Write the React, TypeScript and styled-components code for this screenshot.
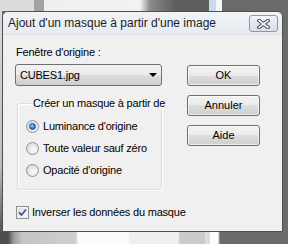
import React from "react";
import styled, { createGlobalStyle } from "styled-components";

const GlobalStyle = createGlobalStyle`
  html, body {
    margin: 0;
    padding: 0;
    width: 288px;
    height: 244px;
    overflow: hidden;
  }
  body {
    font-family: "Liberation Sans", Arial, sans-serif;
    font-size: 11px;
    letter-spacing: -0.2px;
    color: #000;
  }
`;

const Desktop = styled.div`
  width: 288px;
  height: 244px;
  display: grid;
  grid-template-rows: 11px 221px 12px;
  background: #6b6b6b;
`;

const TopStrip = styled.div`
  background: linear-gradient(
    to right,
    #dcdcdc 0px, #dcdcdc 34px,
    #a2a2a2 34px, #a2a2a2 44px,
    #efefef 44px, #f2f2f2 140px,
    #8a8a8a 150px, #5e5e5e 175px, #5e5e5e 209px,
    #c9dbf1 209px, #c9dbf1 216px,
    #f6f6f6 216px, #f6f6f6 222px,
    #6a6a6a 222px
  );
`;

const MiddleRow = styled.div`
  display: flex;
`;

const SideEdge = styled.div<{ $w: number; $bg: string }>`
  width: ${(p) => p.$w}px;
  background: ${(p) => p.$bg};
`;

const BottomStrip = styled.div`
  background: linear-gradient(
    to right,
    #4e4e4e 0px, #4e4e4e 8px,
    #9c9c9c 14px, #c4c4c4 22px, #cfcfcf 76px,
    #fbfbfb 78px, #fbfbfb 128px,
    #efefef 130px, #efefef 178px,
    #cbcbcb 180px, #cbcbcb 205px,
    #d0e1f5 205px, #d0e1f5 210px,
    #fdfdfd 210px, #fdfdfd 218px,
    #6b6b6b 220px
  );
`;

const Window = styled.div`
  width: 281px;
  box-sizing: border-box;
  border: 1px solid #4f4f4f;
  border-radius: 6px 6px 0 0;
  background: #e6ebf1;
  display: flex;
  flex-direction: column;
  overflow: hidden;
`;

const TitleBar = styled.div`
  height: 22px;
  flex: none;
  display: flex;
  justify-content: space-between;
  align-items: flex-start;
  padding-left: 5px;
  background: linear-gradient(#f1f4f8, #e6ebf1);
  border-bottom: 1px solid #dce1e7;
`;

const Title = styled.div`
  font-size: 12px;
  letter-spacing: 0;
  line-height: 22px;
  color: #1c1c1c;
  white-space: nowrap;
`;

const CloseButton = styled.div`
  width: 29px;
  height: 17px;
  margin: 3px 4px 0 0;
  box-sizing: border-box;
  border: 1px solid #8d97a5;
  border-radius: 3px;
  background: linear-gradient(#f2f5f9, #e3e8ee 50%, #d9dfe6);
  display: flex;
  align-items: center;
  justify-content: center;
`;

const Body = styled.div`
  flex: 1;
  background: #f0f0f0;
  padding: 11px 0 0 12px;
  display: flex;
  flex-direction: column;
`;

const Columns = styled.div`
  display: flex;
`;

const LeftCol = styled.div`
  width: 147px;
  display: flex;
  flex-direction: column;
`;

const RightCol = styled.div`
  margin-left: 25px;
  padding-top: 19px;
  display: flex;
  flex-direction: column;
  gap: 9px;
`;

const Label = styled.div`
  line-height: 13px;
  padding-left: 1px;
  white-space: nowrap;
`;

const Combo = styled.div`
  margin-top: 5px;
  height: 22px;
  box-sizing: border-box;
  border: 1px solid #707070;
  border-radius: 3px;
  background: linear-gradient(#f2f2f2 0%, #ebebeb 50%, #dddddd 50%, #cfcfcf 100%);
  display: flex;
  align-items: center;
  justify-content: space-between;
  padding: 0 4px 0 4px;
`;

const Arrow = styled.div`
  width: 0;
  height: 0;
  border-left: 4px solid transparent;
  border-right: 4px solid transparent;
  border-top: 4px solid #000;
`;

const Button = styled.div`
  width: 73px;
  height: 21px;
  box-sizing: border-box;
  border: 1px solid #707070;
  border-radius: 3px;
  background: linear-gradient(#f2f2f2 0%, #ebebeb 50%, #dddddd 50%, #cfcfcf 100%);
  box-shadow: inset 0 0 0 1px rgba(255, 255, 255, 0.6);
  display: flex;
  align-items: center;
  justify-content: center;
  line-height: 13px;
  letter-spacing: 0;
`;

const GroupBox = styled.fieldset`
  margin: 11px 0 0 2px;
  padding: 5px 0 0 8px;
  width: 145px;
  height: 93px;
  box-sizing: border-box;
  border: 1px solid #d5dfe5;
  border-radius: 3px;
  box-shadow: inset 1px 1px 0 #fff, 1px 1px 0 #fff;
  min-width: 0;
`;

const Legend = styled.legend`
  margin-left: 5px;
  padding: 0 2px;
  line-height: 13px;
  white-space: nowrap;
`;

const OptionRow = styled.div`
  height: 22px;
  display: flex;
  align-items: center;
  gap: 4px;
  white-space: nowrap;
`;

const Radio = styled.div<{ $checked?: boolean }>`
  width: 13px;
  height: 13px;
  box-sizing: border-box;
  border-radius: 50%;
  border: 1px solid #8f9294;
  background: radial-gradient(circle at 60% 65%, #fbfbfb 0%, #e6e6e6 55%, #cfcfcf 100%);
  display: flex;
  align-items: center;
  justify-content: center;
  flex: none;

  &::after {
    content: "";
    display: ${(p) => (p.$checked ? "block" : "none")};
    width: 7px;
    height: 7px;
    box-sizing: border-box;
    border-radius: 50%;
    border: 1px solid #1b4f86;
    background: radial-gradient(circle at 40% 35%, #a9d4ff 0%, #3f86d1 50%, #174f8f 100%);
  }
`;

const CheckRow = styled.label`
  margin: 16px 0 0 1px;
  display: flex;
  align-items: center;
  gap: 3px;
  line-height: 13px;
  white-space: nowrap;
`;

const CheckBox = styled.div`
  width: 13px;
  height: 13px;
  box-sizing: border-box;
  border: 1px solid #8e8f8f;
  background: linear-gradient(135deg, #dcdcdc, #fbfbfb);
  box-shadow: inset 0 0 0 1px #f4f4f4;
  display: flex;
  align-items: center;
  justify-content: center;
  flex: none;
`;

const CloseIcon = () => (
  <svg width="13" height="10" viewBox="0 0 13 10">
    <path d="M2 1.5 L11 8.5 M11 1.5 L2 8.5" stroke="#4a4f57" strokeWidth="3.6" strokeLinecap="square" />
    <path d="M2 1.5 L11 8.5 M11 1.5 L2 8.5" stroke="#f4f6f8" strokeWidth="1.6" strokeLinecap="square" />
  </svg>
);

const CheckMark = () => (
  <svg width="9" height="9" viewBox="0 0 9 9">
    <path d="M1 4.5 L3.5 7 L8 1.5" fill="none" stroke="#3d5aa0" strokeWidth="1.8" />
  </svg>
);

const options = [
  { label: "Luminance d'origine", checked: true },
  { label: "Toute valeur sauf zéro", checked: false },
  { label: "Opacité d'origine", checked: false },
];

const App: React.FC = () => {
  return (
    <>
      <GlobalStyle />
      <Desktop>
        <TopStrip />
        <MiddleRow>
          <SideEdge $w={2} $bg="linear-gradient(#d9d9d9, #bdbdbd 70%, #555 100%)" />
          <Window>
            <TitleBar>
              <Title>Ajout d'un masque à partir d'une image</Title>
              <CloseButton>
                <CloseIcon />
              </CloseButton>
            </TitleBar>
            <Body>
              <Columns>
                <LeftCol>
                  <Label>Fenêtre d'origine :</Label>
                  <Combo>
                    <span>CUBES1.jpg</span>
                    <Arrow />
                  </Combo>
                  <GroupBox>
                    <Legend>Créer un masque à partir de</Legend>
                    {options.map((o) => (
                      <OptionRow key={o.label}>
                        <Radio $checked={o.checked} />
                        <span>{o.label}</span>
                      </OptionRow>
                    ))}
                  </GroupBox>
                </LeftCol>
                <RightCol>
                  <Button>OK</Button>
                  <Button>Annuler</Button>
                  <Button>Aide</Button>
                </RightCol>
              </Columns>
              <CheckRow>
                <CheckBox>
                  <CheckMark />
                </CheckBox>
                <span>Inverser les données du masque</span>
              </CheckRow>
            </Body>
          </Window>
          <SideEdge $w={5} $bg="#6b6b6b" />
        </MiddleRow>
        <BottomStrip />
      </Desktop>
    </>
  );
};

export default App;
